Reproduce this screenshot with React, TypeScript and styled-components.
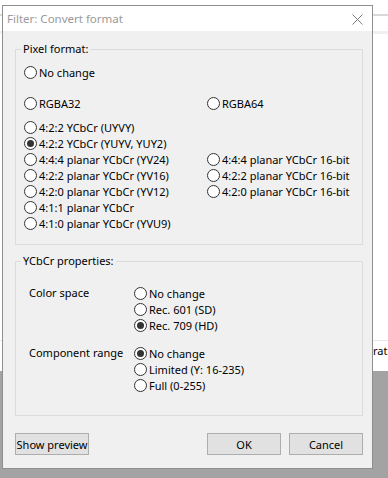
import React from "react";
import styled, { createGlobalStyle } from "styled-components";

const GlobalStyle = createGlobalStyle`
  html, body {
    margin: 0;
    padding: 0;
    background: #ffffff;
  }
  body {
    font-family: "Noto Sans", "Open Sans", sans-serif;
    font-size: 11px;
    color: #000000;
  }
`;

const Desktop = styled.div`
  position: relative;
  width: 388px;
  height: 478px;
  overflow: hidden;
  display: flex;
  flex-direction: column;
`;

const BackWindow = styled.div`
  flex: 0 0 371px;
  display: flex;
  flex-direction: column;
  background: #ffffff;
`;

const BackRule = styled.div`
  margin-top: 14px;
  height: 2px;
  background: #d9d9d9;
`;

const BackBand = styled.div`
  margin-top: 15px;
  height: 3px;
  background: #f0f0f0;
`;

const BackStatus = styled.div`
  margin-top: auto;
  height: 30px;
  padding-left: 373px;
  line-height: 20px;
  font-size: 11px;
  white-space: nowrap;
  border-top: 1px solid #e6e6e6;
`;

const BackShade = styled.div`
  flex: 1;
  background: #a3a3a3;
`;

const Dialog = styled.div`
  position: absolute;
  left: 2px;
  top: 5px;
  width: 369px;
  height: 462px;
  border: 1px solid #8f8f8f;
  background: #f0f0f0;
  display: flex;
  flex-direction: column;
`;

const TitleBar = styled.div`
  height: 25px;
  background: #ffffff;
  display: flex;
  align-items: center;
  justify-content: space-between;
  padding: 0 9px 0 4px;
`;

const TitleText = styled.span`
  color: #9a9a9a;
  font-size: 11.5px;
`;

const CloseIcon = styled.svg`
  width: 11px;
  height: 11px;
  margin-top: 1px;
`;

const Body = styled.div`
  flex: 1;
  display: flex;
  flex-direction: column;
  padding: 18px 9px 11px 12px;
`;

const Group = styled.div<{ $pad: string; $gap?: number }>`
  position: relative;
  border: 1px solid #dcdcdc;
  padding: ${(p) => p.$pad};
  margin-top: ${(p) => p.$gap ?? 0}px;
`;

const GroupLabel = styled.span`
  position: absolute;
  top: -9px;
  left: 5px;
  padding: 0 2px;
  line-height: 16px;
  background: #f0f0f0;
`;

const FormatGrid = styled.div`
  display: grid;
  grid-template-columns: 183px 1fr;
`;

const Row = styled.label<{ $gap?: number }>`
  display: flex;
  align-items: center;
  height: 16px;
  margin-top: ${(p) => p.$gap ?? 0}px;
  white-space: nowrap;
`;

const Circle = styled.span<{ $on?: boolean }>`
  box-sizing: border-box;
  flex: 0 0 13px;
  width: 13px;
  height: 13px;
  border-radius: 50%;
  border: 1px solid #333333;
  background: #ffffff;
  margin-right: 2px;
  display: flex;
  align-items: center;
  justify-content: center;
  &::after {
    content: "";
    width: 7px;
    height: 7px;
    border-radius: 50%;
    background: ${(p) => (p.$on ? "#333333" : "transparent")};
  }
`;

const Section = styled.div<{ $gap?: number }>`
  display: grid;
  grid-template-columns: 105px 1fr;
  margin-top: ${(p) => p.$gap ?? 0}px;
`;

const SectionLabel = styled.div`
  line-height: 16px;
`;

const Options = styled.div`
  display: flex;
  flex-direction: column;
`;

const Buttons = styled.div`
  display: flex;
  align-items: center;
  margin-top: 17px;
  gap: 8px;
`;

const Button = styled.button<{ $push?: boolean }>`
  width: 74px;
  height: 22px;
  padding: 0;
  border: 1px solid #adadad;
  background: #e1e1e1;
  font-family: inherit;
  font-size: 11px;
  white-space: nowrap;
  color: #000000;
  margin-left: ${(p) => (p.$push ? "auto" : "0")};
`;

const Radio = ({
  label,
  on,
  gap,
}: {
  label: string;
  on?: boolean;
  gap?: number;
}) => (
  <Row $gap={gap}>
    <Circle $on={on} />
    {label}
  </Row>
);

const App = () => {
  return (
    <>
      <GlobalStyle />
      <Desktop>
        <BackWindow>
          <BackRule />
          <BackBand />
          <BackStatus>rat</BackStatus>
        </BackWindow>
        <BackShade />

        <Dialog>
          <TitleBar>
            <TitleText>Filter: Convert format</TitleText>
            <CloseIcon viewBox="0 0 11 11">
              <path d="M0.5 0.5 L10.5 10.5 M10.5 0.5 L0.5 10.5" stroke="#7a7a7a" strokeWidth="1" />
            </CloseIcon>
          </TitleBar>
          <Body>
            <Group $pad="14px 8px 13px">
              <GroupLabel>Pixel format:</GroupLabel>
              <FormatGrid>
                <Radio label="No change" />
                <span />
                <Radio label="RGBA32" gap={15} />
                <Radio label="RGBA64" gap={15} />
                <Radio label="4:2:2 YCbCr (UYVY)" gap={8} />
                <span />
                <Radio label="4:2:2 YCbCr (YUYV, YUY2)" on />
                <span />
                <Radio label="4:4:4 planar YCbCr (YV24)" />
                <Radio label="4:4:4 planar YCbCr 16-bit" />
                <Radio label="4:2:2 planar YCbCr (YV16)" />
                <Radio label="4:2:2 planar YCbCr 16-bit" />
                <Radio label="4:2:0 planar YCbCr (YV12)" />
                <Radio label="4:2:0 planar YCbCr 16-bit" />
                <Radio label="4:1:1 planar YCbCr" />
                <span />
                <Radio label="4:1:0 planar YCbCr (YVU9)" />
              </FormatGrid>
            </Group>

            <Group $pad="23px 8px 22px 13px" $gap={16}>
              <GroupLabel>YCbCr properties:</GroupLabel>
              <Section>
                <SectionLabel>Color space</SectionLabel>
                <Options>
                  <Radio label="No change" />
                  <Radio label="Rec. 601 (SD)" />
                  <Radio label="Rec. 709 (HD)" on />
                </Options>
              </Section>
              <Section $gap={12}>
                <SectionLabel>Component range</SectionLabel>
                <Options>
                  <Radio label="No change" on />
                  <Radio label="Limited (Y: 16-235)" />
                  <Radio label="Full (0-255)" />
                </Options>
              </Section>
            </Group>

            <Buttons>
              <Button>Show preview</Button>
              <Button $push>OK</Button>
              <Button>Cancel</Button>
            </Buttons>
          </Body>
        </Dialog>
      </Desktop>
    </>
  );
};

export default App;
